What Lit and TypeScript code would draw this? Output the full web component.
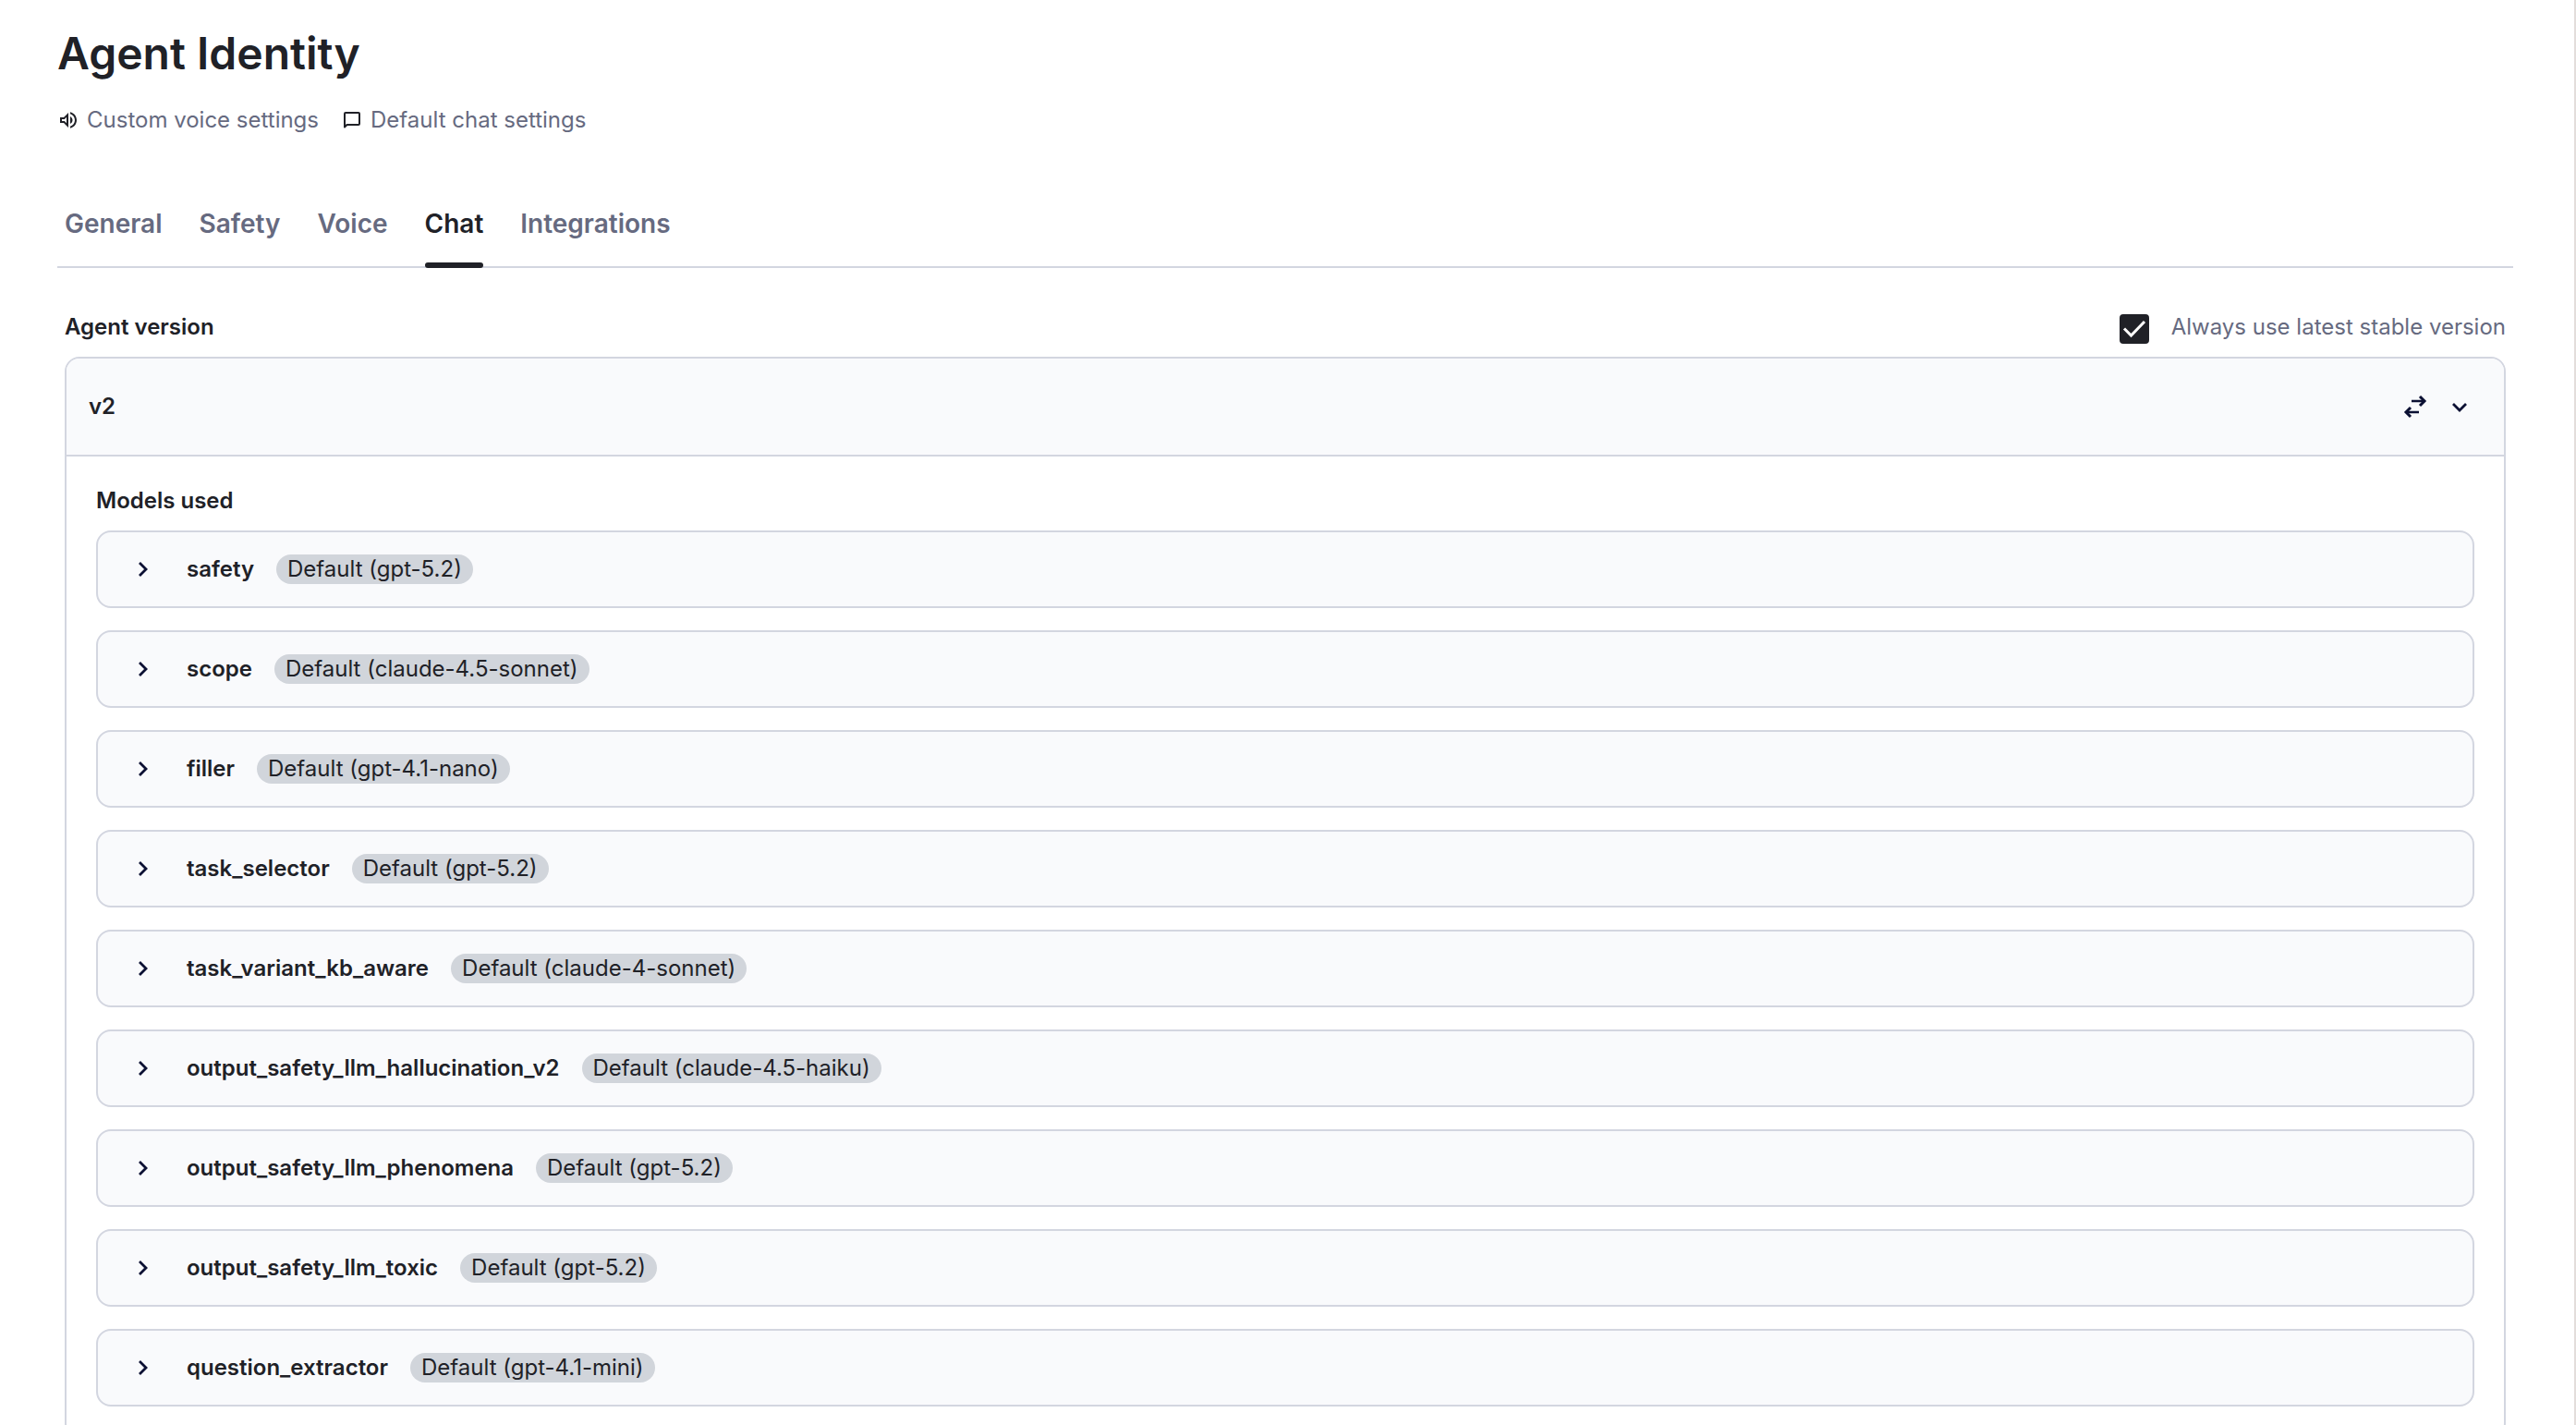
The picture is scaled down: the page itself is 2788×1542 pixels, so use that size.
import { LitElement, html, css, svg } from "lit";
import { customElement, state } from "lit/decorators.js";
import { classMap } from "lit/directives/class-map.js";

interface Model {
  name: string;
  value: string;
}

const TABS = ["General", "Safety", "Voice", "Chat", "Integrations"];

const MODELS: Model[] = [
  { name: "safety", value: "gpt-5.2" },
  { name: "scope", value: "claude-4.5-sonnet" },
  { name: "filler", value: "gpt-4.1-nano" },
  { name: "task_selector", value: "gpt-5.2" },
  { name: "task_variant_kb_aware", value: "claude-4-sonnet" },
  { name: "output_safety_llm_hallucination_v2", value: "claude-4.5-haiku" },
  { name: "output_safety_llm_phenomena", value: "gpt-5.2" },
  { name: "output_safety_llm_toxic", value: "gpt-5.2" },
  { name: "question_extractor", value: "gpt-4.1-mini" },
];

const icon = (name: string, size: number, body: unknown) =>
  html`<svg class="icon icon-${name}" width=${size} height=${size} viewBox="0 0 ${size} ${size}" aria-hidden="true">${body}</svg>`;

const speaker = icon("solid", 24, svg`
  <path d="M3 9v6h4l5 5V4L7 9H3zm7-.17v6.34L7.83 13H5v-2h2.83L10 8.83z" fill="currentColor" fill-rule="evenodd"/>
  <path d="M16.5 12c0-1.77-1.02-3.29-2.5-4.03v8.05c1.48-.73 2.5-2.25 2.5-4.02zM14 3.23v2.06c2.89.86 5 3.54 5 6.71s-2.11 5.85-5 6.71v2.06c4.01-.91 7-4.49 7-8.77s-2.99-7.86-7-8.77z" fill="currentColor"/>`);

const bubble = icon("solid", 24, svg`
  <path d="M4 19.500V5Q4 4 5 4H19Q20 4 20 5V16Q20 17 19 17H6.500Z" fill="none" stroke="currentColor" stroke-width="2" stroke-linejoin="round"/>`);

const swap = icon("navy", 32, svg`
  <path d="M12 10H26M20 22H6" fill="none" stroke="currentColor" stroke-width="2.500"/>
  <path d="M21 5L26 10L21 15M11 17L6 22L11 27" fill="none" stroke="currentColor" stroke-width="3"/>`);

const chevronDown = icon("navy", 32, svg`
  <path d="M9 13L16 20L23 13" fill="none" stroke="currentColor" stroke-width="2.800"/>`);

const chevronRight = icon("navy", 32, svg`
  <path d="M13 9L20 16L13 23" fill="none" stroke="currentColor" stroke-width="2.800"/>`);

@customElement("app-root")
export class AppRoot extends LitElement {
  @state() private tab = "Chat";

  static styles = css`
    :host {
      display: block;
      font-family: Inter, "Liberation Sans", sans-serif;
      font-size: 24px;
      line-height: 32px;
      color: #202127;
      background: #fff;
    }
    * { box-sizing: border-box; }
    h1, h2, h3, ul { margin: 0; padding: 0; font-size: inherit; }
    button {
      font: inherit;
      color: inherit;
      background: none;
      border: 0;
      padding: 0;
      cursor: pointer;
    }
    .page {
      height: 100vh;
      overflow: hidden;
      padding: 28px 66px 0 62px;
      border-right: 2px solid #e2dddb;
    }
    .title { font-size: 48px; line-height: 60px; font-weight: 600; }
    .facts { display: flex; gap: 24px; margin-top: 26px; color: #666a80; }
    .fact { display: flex; align-items: center; gap: 8px; }
    .icon { display: block; flex: none; }
    .icon-solid { color: #202127; }
    .icon-navy { color: #0b1033; }
    .tabs {
      display: flex;
      gap: 40px;
      margin-top: 64px;
      padding: 0 8px;
      border-bottom: 2px solid #d3d6e0;
    }
    .tab {
      position: relative;
      padding: 12px 0 26px;
      font-size: 28px;
      line-height: 40px;
      font-weight: 600;
      color: #666a80;
    }
    .tab.active { color: #202127; }
    .tab.active::after {
      content: "";
      position: absolute;
      left: 0;
      right: 0;
      bottom: -2px;
      height: 6px;
      border-radius: 3px;
      background: #202127;
    }
    .content { padding: 48px 8px 0; }
    .bar { display: flex; justify-content: space-between; align-items: flex-start; }
    .heading { font-weight: 600; }
    .option { display: flex; align-items: flex-start; gap: 24px; color: #666a80; cursor: pointer; }
    .check { display: grid; padding-top: 2px; }
    .check > * { grid-area: 1 / 1; }
    .box {
      appearance: none;
      width: 32px;
      height: 32px;
      margin: 0;
      border: 2px solid #202127;
      border-radius: 4px;
    }
    .box:checked { background: #202127; }
    .tick { display: block; pointer-events: none; color: #fff; }
    .panel {
      margin-top: 14px;
      border: 2px solid #d3d6e0;
      border-radius: 16px;
      overflow: hidden;
    }
    .panel-head {
      display: flex;
      align-items: center;
      justify-content: space-between;
      padding: 36px 32px 36px 24px;
      background: #f9fafc;
      border-bottom: 2px solid #d3d6e0;
    }
    .actions { display: flex; gap: 16px; }
    .panel-body { padding: 32px; }
    .rows { display: flex; flex-direction: column; gap: 24px; margin-top: 16px; list-style: none; }
    .row {
      display: flex;
      align-items: center;
      padding: 24px 32px;
      background: #f9fafc;
      border: 2px solid #d3d6e0;
      border-radius: 16px;
    }
    .name { margin-left: 32px; font-weight: 600; }
    .badge { margin-left: 24px; padding: 0 12px; border-radius: 16px; background: #d1d5db; }
  `;

  render() {
    return html`
      <main class="page">
        <h1 class="title">Agent Identity</h1>
        <div class="facts">
          <span class="fact">${speaker}Custom voice settings</span>
          <span class="fact">${bubble}Default chat settings</span>
        </div>
        <div class="tabs" role="tablist">
          ${TABS.map((t) => html`
            <button
              class=${classMap({ tab: true, active: t === this.tab })}
              role="tab"
              aria-selected=${t === this.tab ? "true" : "false"}
              @click=${() => (this.tab = t)}
            >${t}</button>`)}
        </div>
        <section class="content">
          <div class="bar">
            <h2 class="heading">Agent version</h2>
            <label class="option" for="latest">
              <span class="check">
                <input class="box" id="latest" type="checkbox" checked>
                <svg class="tick" width="32" height="32" viewBox="0 0 32 32" aria-hidden="true">
                  <path d="M5 15.500L12.500 23L27 8" fill="none" stroke="currentColor" stroke-width="3"/>
                </svg>
              </span>
              Always use latest stable version
            </label>
          </div>
          <div class="panel">
            <div class="panel-head">
              <h2 class="heading">v2</h2>
              <div class="actions">
                <button aria-label="Switch version">${swap}</button>
                <button aria-label="Collapse">${chevronDown}</button>
              </div>
            </div>
            <div class="panel-body">
              <h3 class="heading">Models used</h3>
              <ul class="rows">
                ${MODELS.map((m) => html`
                  <li class="row">
                    <button aria-label="Expand ${m.name}">${chevronRight}</button>
                    <span class="name">${m.name}</span>
                    <span class="badge">Default (${m.value})</span>
                  </li>`)}
              </ul>
            </div>
          </div>
        </section>
      </main>
    `;
  }
}
